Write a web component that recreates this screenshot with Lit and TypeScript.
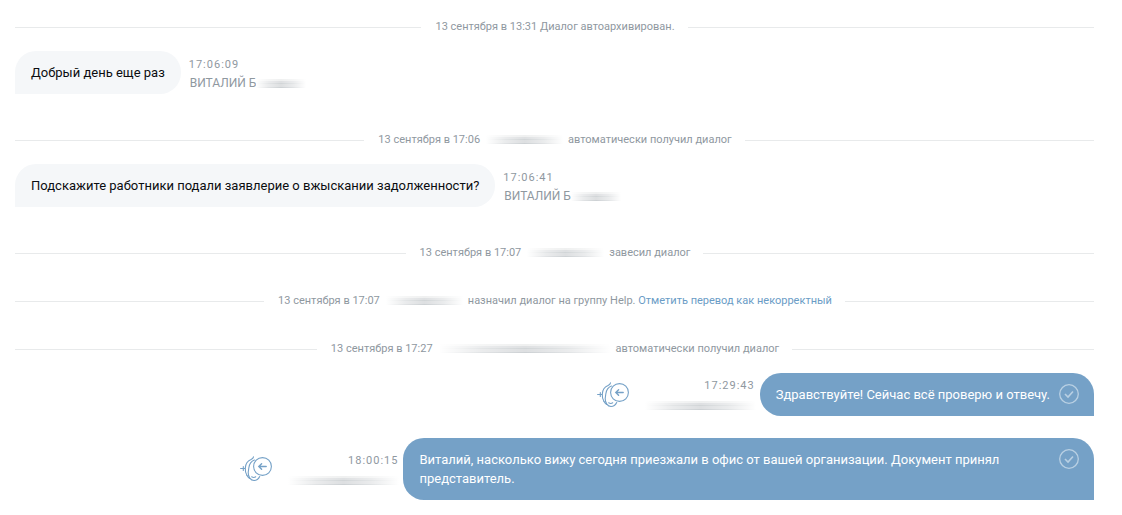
import { LitElement, html, css, nothing } from "lit";
import { customElement, property } from "lit/decorators.js";

@customElement("name-smudge")
class NameSmudge extends LitElement {
  @property({ type: Number }) width = 80;

  static styles = css`
    :host {
      display: block;
      flex: none;
    }
    .bar {
      height: 9px;
      background:
        linear-gradient(90deg, #fff, #fff6 25%, transparent 50%, #fff6 75%, #fff),
        linear-gradient(#eff0f0 0 2px, #dee0e2 2px 4px, #d1d5d7 4px 5px, #dddfe1 5px 8px, #cdd1d4 8px);
    }
  `;

  render() {
    return html`<div class="bar" style="width:${this.width}px"></div>`;
  }
}

@customElement("event-line")
class EventLine extends LitElement {
  @property() when = "";
  @property() text = "";
  @property() action = "";
  @property({ type: Number }) smudge = 0;

  static styles = css`
    :host {
      display: flex;
      align-items: center;
      height: 48px;
      font-size: 11px;
      line-height: 16px;
      color: #8f989f;
    }
    .rule {
      flex: 1;
      height: 1px;
      background: #e8eaeb;
    }
    .label {
      display: flex;
      align-items: center;
      padding: 0 13px 0 14px;
      white-space: pre;
    }
    .hidden {
      margin: 0 5px 2px 6px;
    }
    a {
      color: #6a9cc6;
      text-decoration: none;
    }
  `;

  render() {
    return html`
      <div class="rule"></div>
      <div class="label"><span>${this.when}</span>${this.smudge
        ? html`<name-smudge class="hidden" .width=${this.smudge}></name-smudge>`
        : html`<span> </span>`}<span>${this.text}</span>${this.action
        ? html`<span> </span><a href="#">${this.action}</a>`
        : nothing}</div>
      <div class="rule"></div>
    `;
  }
}

@customElement("chat-message")
class ChatMessage extends LitElement {
  @property() text = "";
  @property() time = "";
  @property() author = "";
  @property({ type: Boolean, reflect: true }) outgoing = false;

  static styles = css`
    :host {
      display: flex;
      align-items: center;
      gap: 8px;
      margin-bottom: 22px;
    }
    :host([outgoing]) {
      justify-content: flex-end;
      gap: 4px;
    }
    .bubble {
      box-sizing: border-box;
      max-width: 64%;
      padding: 12px 16px;
      border-radius: 21px 21px 21px 0;
      background: #f5f7f9;
      color: #0b0d10;
      font-size: 13px;
      line-height: 19px;
    }
    :host([outgoing]) .bubble {
      display: flex;
      gap: 9px;
      padding-right: 15px;
      border-radius: 21px 21px 0 21px;
      background: #75a1c7;
      color: #fff;
    }
    .body {
      flex: 1;
    }
    .check {
      flex: none;
      width: 20px;
      height: 20px;
      margin: -1px 0;
    }
    .meta {
      display: flex;
      flex-direction: column;
      padding-top: 4px;
      color: #8f989f;
    }
    :host([outgoing]) .meta {
      align-items: flex-end;
      padding: 0;
    }
    .time {
      font-size: 11px;
      line-height: 18px;
      letter-spacing: 1px;
    }
    :host([outgoing]) .time {
      padding-right: 1px;
    }
    .author {
      display: flex;
      align-items: center;
      padding-left: 1px;
      font-size: 12px;
      line-height: 19px;
    }
    :host([outgoing]) .author {
      padding: 6px 0 2px;
    }
    .operator {
      flex: none;
      width: 32px;
      height: 26px;
      margin-right: 12px;
    }
  `;

  private renderOperator() {
    return html`<svg class="operator" viewBox="0 0 32 26" fill="none" stroke="#75a1c7" stroke-width="1.1" stroke-linecap="round">
      <path d="M13.500 .8C13.300 2 12.500 2.800 11 3.500 7.500 5 5.500 8 5.300 12c-.2 3 .4 5.500 1.700 7.500" />
      <path d="M14.500 4C11.500 5 9.300 8 8.800 12l-.6 4.500c0 4.500 2.300 8 5.800 8 2.500 0 4.500-1.500 5.700-4" />
      <path d="M7 19.500c.6 1.200 1.500 2.300 2.600 3M11.700 20.800c1.300.8 2.800.8 4 0" />
      <path d="M.6 12.500h4M3.300 10.500v4" />
      <circle cx="22.500" cy="10.500" r="8.900" fill="#fff" />
      <path d="M26.200 10.500h-7.400M21.600 7.800l-2.800 2.700 2.800 2.700" stroke-width="1.400" />
    </svg>`;
  }

  private renderMeta() {
    return html`<div class="meta">
      <time class="time">${this.time}</time>
      <div class="author">
        ${this.author ? html`<span>${this.author}</span>` : nothing}
        <name-smudge .width=${this.outgoing ? 111 : 50}></name-smudge>
      </div>
    </div>`;
  }

  render() {
    if (!this.outgoing) {
      return html`<div class="bubble">${this.text}</div>${this.renderMeta()}`;
    }
    return html`
      ${this.renderOperator()}${this.renderMeta()}
      <div class="bubble">
        <div class="body">${this.text}</div>
        <svg class="check" viewBox="0 0 20 20" fill="none" stroke="#b9d0e3" stroke-width="1.300">
          <circle cx="10" cy="10" r="9.300" />
          <path d="M6 10l3 3 5-5.500" stroke-width="1.600" />
        </svg>
      </div>
    `;
  }
}

@customElement("app-root")
class AppRoot extends LitElement {
  static styles = css`
    :host {
      display: block;
      padding: 3px 28px 0 15px;
      background: #fff;
      font-family: Roboto, "Liberation Sans", sans-serif;
    }
  `;

  render() {
    return html`
      <event-line when="13 сентября в 13:31" text="Диалог автоархивирован."></event-line>
      <chat-message text="Добрый день еще раз" time="17:06:09" author="ВИТАЛИЙ Б"></chat-message>
      <event-line when="13 сентября в 17:06" smudge="77" text="автоматически получил диалог"></event-line>
      <chat-message
        text="Подскажите работники подали заявлерие о вжыскании задолженности?"
        time="17:06:41"
        author="ВИТАЛИЙ Б"
      ></chat-message>
      <event-line when="13 сентября в 17:07" smudge="77" text="завесил диалог"></event-line>
      <event-line
        when="13 сентября в 17:07"
        smudge="77"
        text="назначил диалог на группу Help."
        action="Отметить перевод как некорректный"
      ></event-line>
      <event-line when="13 сентября в 17:27" smudge="172" text="автоматически получил диалог"></event-line>
      <chat-message outgoing text="Здравствуйте! Сейчас всё проверю и отвечу." time="17:29:43"></chat-message>
      <chat-message
        outgoing
        text="Виталий, насколько вижу сегодня приезжали в офис от вашей организации. Документ принял представитель."
        time="18:00:15"
      ></chat-message>
    `;
  }
}
